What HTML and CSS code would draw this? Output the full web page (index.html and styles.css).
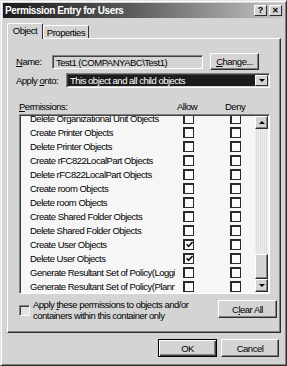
FILE: index.html
```html
<!DOCTYPE html>
<html>
<head>
<meta charset="utf-8">
<title>Permission Entry for Users</title>
<link rel="stylesheet" href="styles.css">
</head>
<body>
<div class="window">
	<div class="titlebar">
		<span class="title">Permission Entry for Users</span>
		<div class="title-btns">
			<span class="tbtn">?</span>
			<span class="tbtn close">&#x2715;</span>
		</div>
	</div>
	<div class="content">
		<div class="tabs">
			<div class="tab active">Object</div>
			<div class="tab">Properties</div>
		</div>
		<div class="panel">
			<div class="row name-row">
				<span class="lbl name-lbl"><u>N</u>ame:</span>
				<div class="textbox">Test1 (COMPANYABC\Test1)</div>
				<span class="btn change-btn"><u>C</u>hange...</span>
			</div>
			<div class="row apply-row">
				<span class="lbl apply-lbl">Apply <u>o</u>nto:</span>
				<div class="select">
					<span class="sel-text">This object and all child objects</span>
					<span class="drop"><i class="arr-down"></i></span>
				</div>
			</div>
			<div class="perm-head">
				<span class="ph-name"><u>P</u>ermissions:</span>
				<span class="ph-allow">Allow</span>
				<span class="ph-deny">Deny</span>
			</div>
			<div class="list">
				<div class="rows">
					<div class="item"><span class="iname">Delete Organizational Unit Objects</span><span class="cb"></span><span class="cb"></span></div>
					<div class="item"><span class="iname">Create Printer Objects</span><span class="cb"></span><span class="cb"></span></div>
					<div class="item"><span class="iname">Delete Printer Objects</span><span class="cb"></span><span class="cb"></span></div>
					<div class="item"><span class="iname">Create rFC822LocalPart Objects</span><span class="cb"></span><span class="cb"></span></div>
					<div class="item"><span class="iname">Delete rFC822LocalPart Objects</span><span class="cb"></span><span class="cb"></span></div>
					<div class="item"><span class="iname">Create room Objects</span><span class="cb"></span><span class="cb"></span></div>
					<div class="item"><span class="iname">Delete room Objects</span><span class="cb"></span><span class="cb"></span></div>
					<div class="item"><span class="iname">Create Shared Folder Objects</span><span class="cb"></span><span class="cb"></span></div>
					<div class="item"><span class="iname">Delete Shared Folder Objects</span><span class="cb"></span><span class="cb"></span></div>
					<div class="item"><span class="iname">Create User Objects</span><span class="cb on"><svg width="7" height="7" viewBox="0 0 7 7"><path d="M0.5 3.2 L2.6 5.4 L6.5 1" fill="none" stroke="#111" stroke-width="1.6"/></svg></span><span class="cb"></span></div>
					<div class="item"><span class="iname">Delete User Objects</span><span class="cb on"><svg width="7" height="7" viewBox="0 0 7 7"><path d="M0.5 3.2 L2.6 5.4 L6.5 1" fill="none" stroke="#111" stroke-width="1.6"/></svg></span><span class="cb"></span></div>
					<div class="item"><span class="iname">Generate Resultant Set of Policy(Logging)</span><span class="cb"></span><span class="cb"></span></div>
					<div class="item"><span class="iname">Generate Resultant Set of Policy(Planning)</span><span class="cb"></span><span class="cb"></span></div>
				</div>
				<div class="scrollbar">
					<span class="sbtn"><i class="arr-up"></i></span>
					<span class="track"></span>
					<span class="thumb"></span>
					<span class="sbtn"><i class="arr-down"></i></span>
				</div>
			</div>
			<div class="footer">
				<div class="apply-only">
					<span class="cb2"></span>
					<span class="apply-text">Apply <u>t</u>hese permissions to objects and/or<br>containers within this container only</span>
				</div>
				<span class="btn clear-btn">C<u>l</u>ear All</span>
			</div>
		</div>
		<div class="buttons">
			<span class="btn ok-btn">OK</span>
			<span class="btn">Cancel</span>
		</div>
	</div>
</div>
</body>
</html>
```

FILE: styles.css
```css
*{margin:0;padding:0;box-sizing:border-box;}
body{background:#d4d4d4;font:9.5px "Liberation Sans",Arial,sans-serif;letter-spacing:-0.5px;color:#000;}
u{text-decoration:underline;text-underline-offset:1px;}

.window{width:287px;height:366px;border:1px solid;border-color:#e4e4e4 #2e2e2e #2e2e2e #e4e4e4;box-shadow:inset 1px 1px #fff,inset -1px -1px #808080;padding:2px;background:#d4d4d4;display:flex;flex-direction:column;}

/* title bar */
.titlebar{height:15px;background:linear-gradient(to right,#1a1a1a 0%,#5a5a5a 45%,#c6c6c6 100%);display:flex;align-items:center;justify-content:space-between;padding:0 2px 0 2px;}
.title{color:#fff;font-weight:bold;font-size:10px;letter-spacing:-0.4px;}
.title-btns{display:flex;gap:2px;}
.tbtn{width:13px;height:11px;background:#d4d4d4;border:1px solid;border-color:#fff #2e2e2e #2e2e2e #fff;display:flex;align-items:center;justify-content:center;font:bold 9px "Liberation Sans",Arial,sans-serif;letter-spacing:0;color:#000;line-height:1;}
.tbtn.close{font-size:8px;}

.content{flex:1;display:flex;flex-direction:column;padding:4px 3px 0 4px;}

/* tabs */
.tabs{height:16px;display:flex;align-items:flex-end;}
.tab{height:13px;border:1px solid;border-bottom:none;border-color:#fff #2e2e2e #fff #fff;border-radius:2px 2px 0 0;display:flex;align-items:center;justify-content:center;white-space:nowrap;}
.tab.active{height:16px;width:36px;position:relative;top:1px;background:#d4d4d4;z-index:1;padding-bottom:2px;}
.tab:not(.active){width:46px;}

.panel{height:295px;border:1px solid;border-color:#fff #2e2e2e #2e2e2e #fff;box-shadow:inset -1px -1px #808080;padding:14px 0 0 8px;display:flex;flex-direction:column;}

/* form rows */
.row{display:flex;align-items:center;}
.name-row{height:17px;}
.lbl{white-space:nowrap;}
.name-lbl{width:36px;}
.textbox{width:151px;height:14px;border:1px solid;border-color:#808080 #fff #fff #808080;box-shadow:inset 1px 1px #404040;padding:1px 0 0 3px;line-height:11px;white-space:nowrap;}
.btn{display:flex;align-items:center;justify-content:center;height:17px;border:1px solid;border-color:#fff #2e2e2e #2e2e2e #fff;box-shadow:inset -1px -1px #808080;background:#d4d4d4;white-space:nowrap;}
.change-btn{width:49px;margin-left:7px;}

.apply-row{height:15px;margin-top:3px;}
.apply-lbl{width:50px;}
.select{width:204px;height:15px;border:1px solid;border-color:#808080 #fff #fff #808080;box-shadow:inset 1px 1px #404040;display:flex;padding:1px;}
.sel-text{flex:1;background:#1c1c1c;color:#fff;padding-left:2px;line-height:12px;white-space:nowrap;}
.drop{width:13px;border:1px solid;border-color:#fff #2e2e2e #2e2e2e #fff;background:#d4d4d4;display:flex;align-items:center;justify-content:center;}

.arr-down{display:block;width:0;height:0;border-left:3px solid transparent;border-right:3px solid transparent;border-top:3px solid #000;}
.arr-up{display:block;width:0;height:0;border-left:3px solid transparent;border-right:3px solid transparent;border-bottom:3px solid #000;}

/* permissions list */
.perm-head{display:flex;height:12px;margin-top:13px;padding-left:3px;line-height:12px;}
.ph-name{width:158px;}
.ph-allow{width:48px;}

.list{height:180px;margin:1px 0 0 3px;width:251px;border:1px solid;border-color:#808080 #fff #fff #808080;box-shadow:inset 1px 1px #404040;padding:1px;display:flex;background:#f6f6f6;}
.rows{flex:1;overflow:hidden;padding-top:1px;}
.rows .item:first-child{margin-top:-6px;}
.item{height:14px;display:flex;align-items:center;padding-left:9px;}
.iname{width:145px;margin-right:8px;flex:none;overflow:hidden;white-space:nowrap;}
.cb{width:11px;height:11px;flex:none;border:2px solid #2a2a2a;border-right-width:1px;border-bottom-width:1px;background:#fafafa;display:flex;align-items:center;justify-content:center;}
.cb + .cb{margin-left:36px;}

.scrollbar{width:13px;display:flex;flex-direction:column;background:#e6e6e6;}
.sbtn{height:13px;border:1px solid;border-color:#fff #2e2e2e #2e2e2e #fff;box-shadow:inset -1px -1px #808080;background:#d4d4d4;display:flex;align-items:center;justify-content:center;}
.track{flex:1;background:repeating-linear-gradient(90deg,#ececec 0 1px,#e0e0e0 1px 2px);}
.thumb{height:25px;border:1px solid;border-color:#fff #2e2e2e #2e2e2e #fff;box-shadow:inset -1px -1px #808080;background:#d4d4d4;}

/* footer */
.footer{display:flex;align-items:center;justify-content:space-between;margin:5px 3px 0 3px;height:22px;}
.apply-only{display:flex;align-items:center;gap:3px;}
.cb2{width:11px;height:11px;flex:none;border:1px solid;border-color:#808080 #fff #fff #808080;box-shadow:inset 1px 1px #404040;background:#e2e2e2;}
.apply-text{line-height:11px;white-space:nowrap;}
.clear-btn{width:59px;height:18px;align-self:flex-start;margin-top:1px;}

.buttons{display:flex;justify-content:flex-end;gap:4px;margin-top:6px;padding-right:2px;}
.buttons .btn{width:58px;height:18px;}
.ok-btn{width:59px !important;border:1px solid #000;box-shadow:inset 1px 1px #fff,inset -1px -1px #404040,inset -2px -2px #808080;}
```
